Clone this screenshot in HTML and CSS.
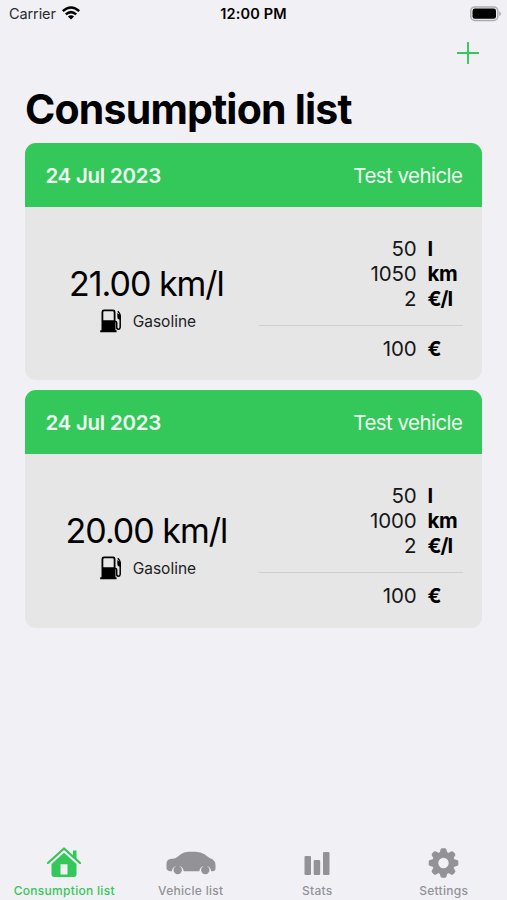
FILE: index.html
```html
<!DOCTYPE html>
<html lang="en">
<head>
<meta charset="utf-8">
<title>Consumption list</title>
<link rel="stylesheet" href="styles.css">
</head>
<body>
<svg width="0" height="0" class="defs" aria-hidden="true">
  <symbol id="pump" viewBox="0 0 22 24">
    <path fill-rule="evenodd" d="M1.500 3Q1.500.6 4 .6H13Q15.500.6 15.500 3V21.300H16.600V23.300H.2V21.300H1.500ZM3.300 3.400V11.300H13.700V3.400Q13.700 2.300 12.600 2.300H4.400Q3.300 2.300 3.300 3.400Z"/>
    <path d="M15 12.500H15.600Q16.700 12.500 16.700 13.700V18.300Q16.700 20.200 18.300 20.200T20.200 18.300V6.500Q20.200 4.600 17.800 2.300" fill="none" stroke="#000" stroke-width="1.500"/>
    <path d="M17.300 4L20.800 6.500V10.500H19Q17.300 10 17.300 8Z"/>
  </symbol>
</svg>
<div class="screen">
  <header class="status">
    <div class="carrier"><span>Carrier</span>
      <svg class="wifi" viewBox="0 0 18 14"><g fill="none" stroke="#000" stroke-width="2.500"><path d="M.8 5.100Q9-2.200 17.200 5.100"/><path d="M3.800 8.400Q9 3.800 14.200 8.400"/></g><path d="M9 13.500L5.900 10.600Q9 8.100 12.100 10.600Z"/></svg>
    </div>
    <div class="time">12:00 PM</div>
    <svg class="battery" viewBox="0 0 32 16"><rect x=".8" y=".9" width="27" height="13.600" rx="4" fill="#f1f0f5" stroke="#adadb0" stroke-width="1.500"/><rect x="2.500" y="2.600" width="23.500" height="10.200" rx="2.300"/><path d="M29.200 5.300Q31 6 31 7.700T29.200 10.100Z" fill="#adadb0"/></svg>
  </header>
  <div class="toolbar"><svg class="plus" viewBox="0 0 22 22"><path d="M11 .7V21.300M.7 11H21.300" stroke="#34c759" stroke-width="1.900" stroke-linecap="round"/></svg></div>
  <h1>Consumption list</h1>
  <main class="list">
    <article class="card">
      <div class="card-head"><strong class="date">24 Jul 2023</strong><span class="vehicle">Test vehicle</span></div>
      <div class="card-body">
        <div class="summary">
          <div class="rate">21.00 km/l</div>
          <div class="fuel"><svg class="pump"><use href="#pump"/></svg><span>Gasoline</span></div>
        </div>
        <div class="details">
          <div class="rows"><span>50</span><b>l</b><span>1050</span><b>km</b><span>2</span><b class="price">€/l</b></div>
          <div class="rows total"><span>100</span><b>€</b></div>
        </div>
      </div>
    </article>
    <article class="card">
      <div class="card-head"><strong class="date">24 Jul 2023</strong><span class="vehicle">Test vehicle</span></div>
      <div class="card-body">
        <div class="summary">
          <div class="rate">20.00 km/l</div>
          <div class="fuel"><svg class="pump"><use href="#pump"/></svg><span>Gasoline</span></div>
        </div>
        <div class="details">
          <div class="rows"><span>50</span><b>l</b><span>1000</span><b>km</b><span>2</span><b class="price">€/l</b></div>
          <div class="rows total"><span>100</span><b>€</b></div>
        </div>
      </div>
    </article>
  </main>
  <nav class="tabs">
    <div class="tab active">
      <svg width="50" height="32" viewBox="0 0 50 32"><path d="M9 17L25 2.500L41 17" fill="none" stroke="currentColor" stroke-width="2.300" stroke-linecap="round" stroke-linejoin="round"/><path d="M34 4.500H37.500V13L34 9.800Z"/><path fill-rule="evenodd" d="M25 6.800L37.500 18V28Q37.500 31 34.500 31H15.500Q12.500 31 12.500 28V18ZM21.500 18.200V28.500H28.500V18.200Z"/></svg>
      <span class="label">Consumption list</span>
    </div>
    <div class="tab">
      <svg width="50" height="32" viewBox="0 0 50 32"><path d="M.5 18Q.5 13.300 4.500 12.900L9.500 12.300L15.500 7.700Q18.500 5.700 23 5.700H29.500Q35 5.700 38.500 8.200L43.500 12Q49.500 13.800 49.500 19V22.500Q49.500 25.200 46.500 25.200H45.200A6 6 0 0 0 33.300 25.200H17.700A6 6 0 0 0 5.800 25.200H4Q.5 24.500.5 22Z"/><circle cx="11.700" cy="24" r="4.200"/><circle cx="39.300" cy="24" r="4.200"/></svg>
      <span class="label">Vehicle list</span>
    </div>
    <div class="tab">
      <svg width="50" height="32" viewBox="0 0 50 32"><rect x="12.500" y="10" width="6.500" height="19" rx="1"/><rect x="21.700" y="14" width="6.500" height="15" rx="1"/><rect x="31" y="6" width="6.500" height="23" rx="1"/></svg>
      <span class="label">Stats</span>
    </div>
    <div class="tab">
      <svg width="50" height="32" viewBox="-24.500 -17 50 32"><circle r="8.200" fill="none" stroke="currentColor" stroke-width="6"/><g id="teeth"><path id="tooth" d="M-3.900-10L-2.900-13.500Q-2.500-14.800-1.300-14.800H1.300Q2.500-14.800 2.900-13.500L3.900-10Z"/><use href="#tooth" transform="rotate(45)"/><use href="#tooth" transform="rotate(90)"/><use href="#tooth" transform="rotate(135)"/></g><use href="#teeth" transform="rotate(180)"/></svg>
      <span class="label">Settings</span>
    </div>
  </nav>
</div>
</body>
</html>
```
FILE: styles.css
```css
* { box-sizing: border-box; }
body { margin: 0; background: #f1f0f5; color: #000; font-family: Inter, "Liberation Sans", sans-serif; }
.defs { display: none; }
.screen { width: 507px; height: 900px; display: flex; flex-direction: column; overflow: hidden; }
.status { height: 28px; padding: 0 7px 0 9px; display: grid; grid-template-columns: 1fr auto 1fr; align-items: center; font-size: 14.5px; line-height: 28px; }
.carrier { display: flex; align-items: center; gap: 6px; color: #2b2b2d; letter-spacing: -.1px; }
.wifi { width: 18px; height: 14px; margin-bottom: 2px; }
.time { font-weight: 600; letter-spacing: .15px; margin-left: -2px; }
.battery { width: 32px; height: 16px; justify-self: end; margin-bottom: 1px; margin-right: -2px; }
.toolbar { height: 56px; display: flex; justify-content: flex-end; padding: 14px 28px 0 0; }
.plus { width: 22px; height: 22px; }
h1 { margin: 0; height: 59px; padding-left: 25px; font-size: 41px; line-height: 50px; font-weight: 700; letter-spacing: -.8px; white-space: nowrap; }
.list { margin: 0 24.600px 0 25.400px; display: flex; flex-direction: column; gap: 10px; }
.card { height: 237.400px; border-radius: 11px; overflow: hidden; background: #e6e6e6; }
.card-head { height: 64px; padding: 0 20px; display: flex; align-items: center; justify-content: space-between; background: #34c759; color: #eefcf1; font-size: 20.500px; }
.date { font-weight: 600; letter-spacing: -.25px; }
.vehicle { font-weight: 400; letter-spacing: -.55px; }
.card-body { display: grid; grid-template-columns: 234px 204px; height: 173px; }
.summary { padding: 56px 0 0 8px; display: flex; flex-direction: column; align-items: center; }
.rate { font-size: 34px; line-height: 42px; letter-spacing: -1px; white-space: nowrap; }
.fuel { height: 32px; padding-left: 3px; display: flex; align-items: center; gap: 11px; font-size: 15.500px; color: #222; }
.pump { width: 22px; height: 24px; color: #000; fill: #000; }
.details { padding-top: 29px; }
.rows { display: grid; grid-template-columns: 157px 1fr; column-gap: 11px; line-height: 25px; font-size: 20.500px; letter-spacing: -.2px; color: #171717; }
.rows span { text-align: right; }
.rows b { font-weight: 700; color: #000; }
.rows .price { letter-spacing: -1px; }
.total { margin-top: 14px; padding-top: 10px; border-top: 1px solid #cfcfd1; }
.tabs { margin-top: auto; height: 56px; padding-left: 1px; display: grid; grid-template-columns: repeat(4, 1fr); }
.tab { display: flex; flex-direction: column; align-items: center; padding-top: 2px; color: #929297; }
.tab svg { fill: currentColor; }
.tab.active { color: #34c759; }
.label { margin-top: 5px; font-size: 12px; line-height: 16px; font-weight: 500; letter-spacing: .3px; white-space: nowrap; }
```
